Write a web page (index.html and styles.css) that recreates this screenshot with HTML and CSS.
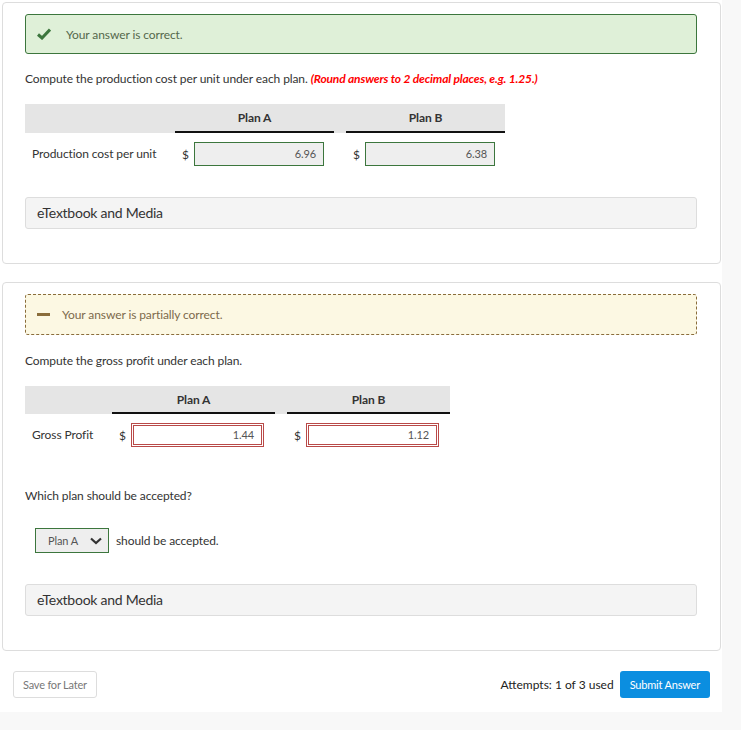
FILE: index.html
```html
<!DOCTYPE html>
<html lang="en">
<head>
    <meta charset="UTF-8">
    <title>Question</title>
    <link rel="stylesheet" href="styles.css">
</head>
<body>
    <div class="page">
        <div class="card">
            <div class="alert alert-correct">
                <svg class="alert-icon" width="14" height="12" viewBox="0 0 14 12">
                    <path d="M1 6.5 L5 10 L13 1.5" fill="none" stroke="#3c763d" stroke-width="3"/>
                </svg>
                <span>Your answer is correct.</span>
            </div>

            <p class="question">Compute the production cost per unit under each plan. <em class="hint">(Round answers to 2 decimal places, e.g. 1.25.)</em></p>

            <div class="grid grid-one">
                <div class="head"></div>
                <div class="head col">Plan A</div>
                <div class="head"></div>
                <div class="head col">Plan B</div>

                <div class="label">Production cost per unit</div>
                <div class="cell"><span class="dollar">$</span><span class="field field-ok">6.96</span></div>
                <div></div>
                <div class="cell"><span class="dollar">$</span><span class="field field-ok">6.38</span></div>
            </div>

            <div class="media">eTextbook and Media</div>
        </div>

        <div class="card card-two">
            <div class="alert alert-partial">
                <span class="minus"></span>
                <span>Your answer is partially correct.</span>
            </div>

            <p class="question">Compute the gross profit under each plan.</p>

            <div class="grid grid-two">
                <div class="head"></div>
                <div class="head col">Plan A</div>
                <div class="head"></div>
                <div class="head col">Plan B</div>

                <div class="label">Gross Profit</div>
                <div class="cell"><span class="dollar">$</span><span class="field field-bad">1.44</span></div>
                <div></div>
                <div class="cell"><span class="dollar">$</span><span class="field field-bad">1.12</span></div>
            </div>

            <p class="question which">Which plan should be accepted?</p>

            <div class="choice">
                <span class="select">Plan A
                    <svg width="12" height="8" viewBox="0 0 12 8">
                        <path d="M1 1.5 L6 6 L11 1.5" fill="none" stroke="#333" stroke-width="2.2"/>
                    </svg>
                </span>
                <span>should be accepted.</span>
            </div>

            <div class="media">eTextbook and Media</div>
        </div>

        <div class="footer">
            <button class="btn-save">Save for Later</button>
            <div class="submit-area">
                <span class="attempts">Attempts: 1 of 3 used</span>
                <button class="btn-submit">Submit Answer</button>
            </div>
        </div>
    </div>
</body>
</html>
```

FILE: styles.css
```css
body {
    margin: 0;
    background-color: #f8f8f8;
    font-family: Lato, "Open Sans", sans-serif;
    color: #333;
    font-size: 12px;
    letter-spacing: -0.1px;
}

.page {
    width: 719px;
    height: 708px;
    padding: 2px 1px 2px 2px;
    background-color: #fff;
}

.card {
    border: 1px solid #ddd;
    border-radius: 4px;
    padding: 11px 23px 34px 22px;
}

.card-two {
    margin-top: 18px;
}

.alert {
    display: flex;
    align-items: center;
    height: 38px;
    border-radius: 3px;
    padding-left: 11px;
}

.alert-correct {
    background-color: #dff0d8;
    border: 1px solid #3c763d;
    color: #55684c;
}

.alert-icon {
    margin-right: 15px;
}

.alert-partial {
    height: 39px;
    background-color: #fcf8e3;
    border: 1px dashed #8a6d3b;
    color: #7c6a4c;
}

.minus {
    width: 13px;
    height: 3px;
    background-color: #8a6d3b;
    margin-right: 12px;
}

.question {
    margin: 18px 0 0;
    line-height: 14px;
}

.card-two .question {
    margin-top: 19px;
}

.hint {
    color: #ff0000;
    font-weight: bold;
    letter-spacing: -0.15px;
}

.grid {
    display: grid;
    margin-top: 18px;
}

.grid-one {
    width: 480px;
    grid-template-columns: 150px 159px 12px 159px;
}

.grid-two {
    width: 425px;
    grid-template-columns: 87px 163px 12px 163px;
}

.head {
    background-color: #e5e5e5;
    height: 29px;
}

.grid-two .head {
    height: 28px;
}

.head.col {
    box-sizing: border-box;
    border-bottom: 2px solid #111;
    text-align: center;
    font-weight: bold;
    line-height: 28px;
}

.label {
    padding-left: 7px;
    line-height: 20px;
    margin-top: 11px;
}

.cell {
    display: flex;
    align-items: center;
    margin-top: 9px;
    padding-left: 7px;
}

.dollar {
    width: 12px;
    color: #333;
}

.field {
    box-sizing: border-box;
    height: 24px;
    line-height: 18px;
    text-align: right;
    padding-right: 7px;
    font-size: 11px;
    color: #555;
}

.grid-one .field {
    width: 130px;
}

.grid-two .field {
    width: 133px;
}

.field-ok {
    background-color: #eee;
    border: 1px solid #3c763d;
    line-height: 22px;
}

.field-bad {
    background-color: #fff;
    border: 3px double #b94a48;
}

.card-two .which {
    margin-top: 42px;
}

.choice {
    display: flex;
    align-items: center;
    margin-top: 25px;
    margin-left: 10px;
}

.select {
    display: flex;
    align-items: center;
    justify-content: space-between;
    box-sizing: border-box;
    width: 74px;
    height: 25px;
    padding: 0 6px 0 12px;
    background-color: #eee;
    border: 1px solid #3c763d;
    font-size: 11px;
    color: #555;
    margin-right: 7px;
}

.media {
    margin-top: 31px;
    height: 30px;
    line-height: 30px;
    padding-left: 11px;
    background-color: #f4f4f4;
    border: 1px solid #ddd;
    border-radius: 3px;
    font-size: 14px;
    letter-spacing: -0.25px;
    color: #333;
}

.footer {
    display: flex;
    justify-content: space-between;
    align-items: center;
    margin-top: 20px;
    padding: 0 11px 0 11px;
}

.btn-save {
    height: 27px;
    padding: 0 9px;
    background-color: #fff;
    border: 1px solid #ddd;
    border-radius: 3px;
    font-family: Lato, sans-serif;
    font-size: 11px;
    letter-spacing: -0.2px;
    color: #777;
}

.submit-area {
    display: flex;
    align-items: center;
    gap: 6px;
}

.attempts {
    font-size: 12px;
    letter-spacing: 0;
    color: #222;
}

.btn-submit {
    height: 27px;
    padding: 0 10px;
    background-color: #0b8ee0;
    border: none;
    border-radius: 3px;
    color: #fff;
    font-family: Lato, sans-serif;
    font-size: 11px;
    letter-spacing: -0.2px;
}
```
